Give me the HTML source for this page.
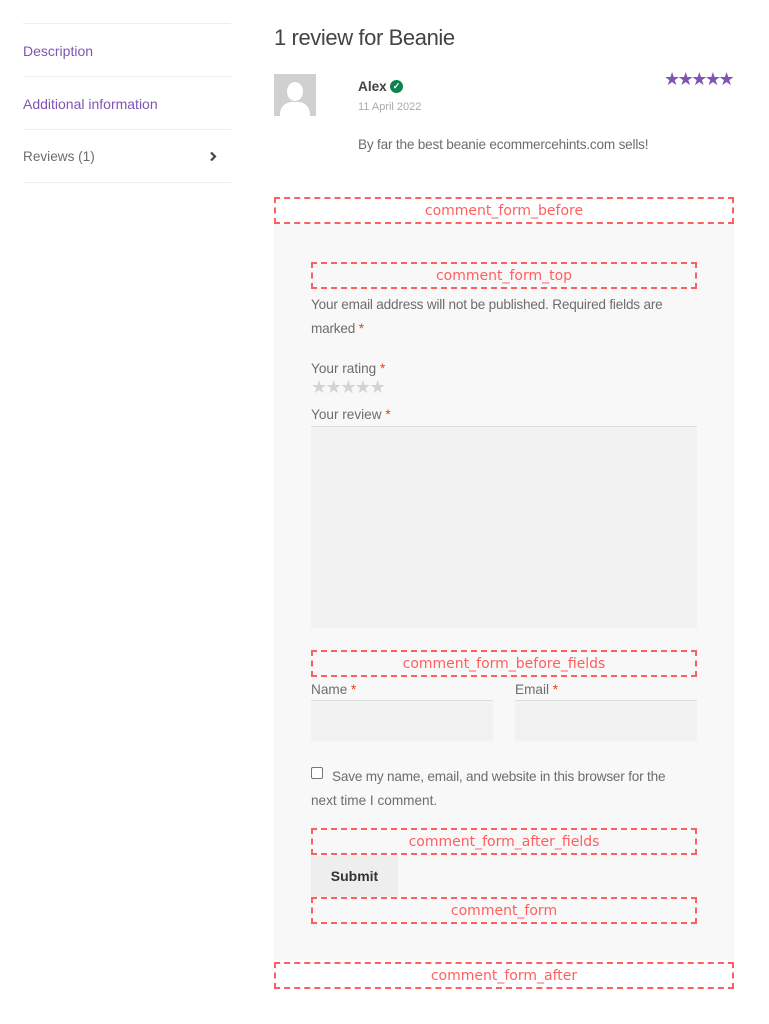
<!DOCTYPE html>
<html><head><meta charset="utf-8"><style>
*{margin:0;padding:0;box-sizing:border-box}
body{width:769px;height:1024px;background:#fff;font-family:"Liberation Sans",sans-serif;color:#6d6d6d;position:relative;overflow:hidden}
.a{position:absolute}
.hr{position:absolute;left:23px;width:208px;height:1px;background:#eee}
.lnk{color:#7f54b3;font-size:14px}
.box{position:absolute;border:2px dashed #ff5f5f;color:#ff5f5f;font-size:14px;text-align:center;line-height:25px;font-family:"DejaVu Sans","Liberation Sans",sans-serif}
.req{color:#e2401c}
.t{font-size:13.6px}
.field{position:absolute;background:#f2f2f2;border-top:1px solid #ddd}
.st{font-size:18px;letter-spacing:-2.5px}
</style></head><body>
<div class="hr" style="top:23px"></div>
<div class="a lnk" style="left:23px;top:43px">Description</div>
<div class="hr" style="top:76px"></div>
<div class="a lnk" style="left:23px;top:96px">Additional information</div>
<div class="hr" style="top:129px"></div>
<div class="a t" style="left:23px;top:149px">Reviews (1)</div>
<svg class="a" style="left:209px;top:151px" width="8" height="11" viewBox="0 0 8 11"><path d="M2 1.5L6 5.5L2 9.5" stroke="#444" stroke-width="2.2" fill="none"/></svg>
<div class="hr" style="top:182px"></div>

<div class="a" style="left:274px;top:25px;font-size:22px;color:#444;letter-spacing:-0.4px">1 review for Beanie</div>
<div class="a" style="left:274px;top:74px;width:42px;height:42px;background:#d0d0d0;overflow:hidden">
<div class="a" style="left:13px;top:8px;width:16px;height:19px;border-radius:50%;background:#fff"></div>
<div class="a" style="left:6px;top:28px;width:30px;height:20px;border-radius:12px 12px 0 0;background:#fff"></div></div>
<div class="a" style="left:358px;top:79px;font-size:13.6px;font-weight:bold;color:#444">Alex</div>
<div class="a" style="left:390px;top:80px;width:13px;height:13px;border-radius:50%;background:#0f834d;color:#fff;font-size:9px;line-height:13px;text-align:center;font-weight:bold">&#10003;</div>
<div class="a" style="left:358px;top:101px;font-size:11px;color:#aaa">11 April 2022</div>
<div class="a st" style="left:664px;top:69px;color:#7f54b3">★★★★★</div>
<div class="a t" style="left:358px;top:137px;letter-spacing:-0.2px">By far the best beanie ecommercehints.com sells!</div>

<div class="box" style="left:274px;top:197px;width:460px;height:27px">comment_form_before</div>
<div class="a" style="left:274px;top:224px;width:460px;height:736px;background:#f8f8f8"></div>
<div class="box" style="left:311px;top:262px;width:386px;height:27px">comment_form_top</div>
<div class="a t" style="left:311px;top:293px;width:390px;line-height:24px;letter-spacing:-0.2px">Your email address will not be published. Required fields are marked <span class="req">*</span></div>
<div class="a t" style="left:311px;top:361px">Your rating <span class="req">*</span></div>
<div class="a st" style="left:311px;top:377px;color:#d3d3d3;letter-spacing:-1.5px">★★★★★</div>
<div class="a t" style="left:311px;top:407px">Your review <span class="req">*</span></div>
<div class="field" style="left:311px;top:426px;width:386px;height:202px"></div>
<div class="box" style="left:311px;top:650px;width:386px;height:27px">comment_form_before_fields</div>
<div class="a t" style="left:311px;top:682px">Name <span class="req">*</span></div>
<div class="a t" style="left:515px;top:682px">Email <span class="req">*</span></div>
<div class="field" style="left:311px;top:700px;width:182px;height:41px"></div>
<div class="field" style="left:515px;top:700px;width:182px;height:41px"></div>
<div class="a" style="left:311px;top:767px;width:12px;height:12px;border:1px solid #777;border-radius:2px;background:#fff"></div>
<div class="a t" style="left:332px;top:765px;width:370px;line-height:24px;letter-spacing:-0.2px">Save my name, email, and website in this browser for the</div>
<div class="a t" style="left:311px;top:789px;line-height:24px">next time I comment.</div>
<div class="box" style="left:311px;top:828px;width:386px;height:27px">comment_form_after_fields</div>
<div class="a" style="left:311px;top:856px;width:87px;height:41px;background:#eee;color:#333;font-weight:bold;font-size:14px;text-align:center;line-height:41px">Submit</div>
<div class="box" style="left:311px;top:897px;width:386px;height:27px">comment_form</div>
<div class="box" style="left:274px;top:962px;width:460px;height:27px">comment_form_after</div>
</body></html>
